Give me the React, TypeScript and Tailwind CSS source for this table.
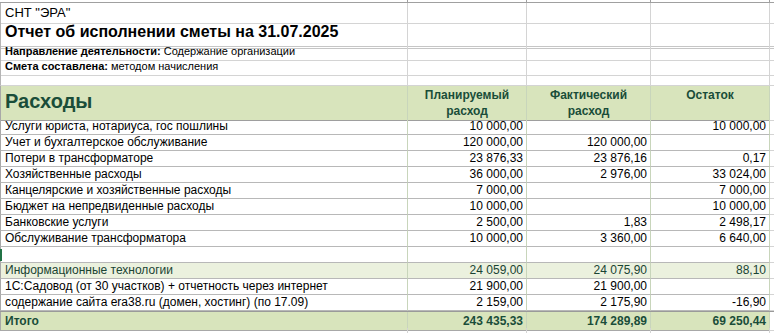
import type { ReactNode } from 'react'

type Line = {
  name: string
  plan: string
  fact: string
  rest: string
  kind?: 'group' | 'total' | 'empty'
}

const lines: Line[] = [
  { name: 'Услуги юриста, нотариуса, гос пошлины', plan: '10 000,00', fact: '', rest: '10 000,00' },
  { name: 'Учет и бухгалтерское обслуживание', plan: '120 000,00', fact: '120 000,00', rest: '' },
  { name: 'Потери в трансформаторе', plan: '23 876,33', fact: '23 876,16', rest: '0,17' },
  { name: 'Хозяйственные расходы', plan: '36 000,00', fact: '2 976,00', rest: '33 024,00' },
  { name: 'Канцелярские и хозяйственные расходы', plan: '7 000,00', fact: '', rest: '7 000,00' },
  { name: 'Бюджет на непредвиденные расходы', plan: '10 000,00', fact: '', rest: '10 000,00' },
  { name: 'Банковские услуги', plan: '2 500,00', fact: '1,83', rest: '2 498,17' },
  { name: 'Обслуживание трансформатора', plan: '10 000,00', fact: '3 360,00', rest: '6 640,00' },
  { name: '', plan: '', fact: '', rest: '', kind: 'empty' },
  { name: 'Информационные технологии', plan: '24 059,00', fact: '24 075,90', rest: '88,10', kind: 'group' },
  { name: '1С:Садовод (от 30 участков) + отчетность через интернет', plan: '21 900,00', fact: '21 900,00', rest: '' },
  { name: 'содержание сайта era38.ru (домен, хостинг) (по 17.09)', plan: '2 159,00', fact: '2 175,90', rest: '-16,90' },
]

const grid = 'grid grid-cols-[408px_119px_124px_119px_4px]'

function TopRow({ h, children, bottom = 'border-b border-[#d4d4d4]' }: { h: string; children?: ReactNode; bottom?: string }) {
  return (
    <div className={`${grid} ${h}`}>
      <div className={`${bottom} border-l border-r border-l-[#b5b5b5] border-r-[#d4d4d4] pl-[4px] flex items-center whitespace-nowrap overflow-visible`}>
        {children}
      </div>
      <div className={`${bottom} border-r border-r-[#d4d4d4]`} />
      <div className={`${bottom} border-r border-r-[#d4d4d4]`} />
      <div className={`${bottom} border-r border-r-[#d4d4d4]`} />
      <div className={bottom} />
    </div>
  )
}

function DataRow({ line }: { line: Line }) {
  const bg = line.kind === 'group' ? 'bg-[#ebf1de]' : ''
  const tone = line.kind === 'group' ? 'text-[#1a4433]' : 'text-black'
  const cell = `h-[16px] border-b border-b-[#b8b8b8] border-r border-r-[#c8d5bb] ${bg}`
  return (
    <div className={`${grid} text-[12px] leading-[15px] ${tone}`}>
      <div className={`${cell} border-l border-l-[#a8a8a8] pl-[4px] flex items-center whitespace-nowrap relative`}>
        {line.kind === 'empty' && <span className="absolute left-[-1px] top-[2px] w-[2px] h-[12px] bg-[#217346]" />}
        {line.name}
      </div>
      <div className={`${cell} pr-[3px] flex items-center justify-end`}>{line.plan}</div>
      <div className={`${cell} pr-[3px] flex items-center justify-end`}>{line.fact}</div>
      <div className={`${cell} pr-[3px] flex items-center justify-end`}>{line.rest}</div>
      <div className="h-[16px] border-b border-b-[#d4d4d4]" />
    </div>
  )
}

export default function App() {
  return (
    <div className="w-[774px] h-[333px] overflow-hidden bg-white font-['Liberation_Sans',Arial,sans-serif] text-black">
      {/* column header edge */}
      <div className={`${grid} h-[2px]`}>
        <div className="border-r border-[#a0a0a0]" />
        <div className="border-r border-[#a0a0a0]" />
        <div className="border-r border-[#a0a0a0]" />
        <div className="border-r border-[#a0a0a0]" />
        <div />
      </div>
      <div className="border-t border-[#a0a0a0]">
        <TopRow h="h-[17px]">
          <span className="text-[13px]">СНТ "ЭРА"</span>
        </TopRow>
        <TopRow h="h-[23px]" bottom="border-b-[3px] border-double border-b-[#c6c6c6]">
          <span className="text-[16px] font-bold pb-[2px]">Отчет об исполнении сметы на 31.07.2025</span>
        </TopRow>
        <TopRow h="h-[15px]">
          <span className="text-[11px]">
            <b>Направление деятельности:</b> Содержание организации
          </span>
        </TopRow>
        <TopRow h="h-[15px]">
          <span className="text-[11px]">
            <b>Смета составлена:</b> методом начисления
          </span>
        </TopRow>
        <TopRow h="h-[13px]" />
      </div>

      {/* table header */}
      <div className={`${grid} h-[33px] text-[#1a4d39] font-bold`}>
        <div className="bg-[#d8e4bc] border-l border-l-[#a8a8a8] border-r border-r-[#c8d5bb] border-b border-b-[#9e9e9e] pl-[4px] pb-[4px] flex items-center text-[20px]">
          Расходы
        </div>
        <div className="bg-[#d8e4bc] border-r border-r-[#c8d5bb] border-b border-b-[#9e9e9e] pt-[1px] text-center text-[12px] leading-[16px]">
          Планируемый
          <br />
          расход
        </div>
        <div className="bg-[#d8e4bc] border-r border-r-[#c8d5bb] border-b border-b-[#9e9e9e] pt-[1px] text-center text-[12px] leading-[16px]">
          Фактический
          <br />
          расход
        </div>
        <div className="bg-[#d8e4bc] border-r border-r-[#c8d5bb] border-b border-b-[#9e9e9e] pt-[1px] text-center text-[12px] leading-[16px]">
          Остаток
        </div>
        <div className="border-b border-b-[#d4d4d4]" />
      </div>

      {lines.map((line, i) => (
        <DataRow key={i} line={line} />
      ))}

      {/* total */}
      <div className={`${grid} h-[17px] text-[12px] font-bold text-[#1a4d39] border-t border-t-[#9a9a9a]`}>
        <div className="bg-[#d8e4bc] border-l border-l-[#a8a8a8] border-r border-r-[#c8d5bb] border-b border-b-[#a8a8a8] pl-[4px] flex items-center">
          Итого
        </div>
        <div className="bg-[#d8e4bc] border-r border-r-[#c8d5bb] border-b border-b-[#a8a8a8] pr-[3px] flex items-center justify-end">
          243 435,33
        </div>
        <div className="bg-[#d8e4bc] border-r border-r-[#c8d5bb] border-b border-b-[#a8a8a8] pr-[3px] flex items-center justify-end">
          174 289,89
        </div>
        <div className="bg-[#d8e4bc] border-r border-r-[#c8d5bb] border-b border-b-[#a8a8a8] pr-[3px] flex items-center justify-end">
          69 250,44
        </div>
        <div className="border-b border-b-[#d4d4d4]" />
      </div>

      <div className={`${grid} h-[6px]`}>
        <div className="border-r border-r-[#d4d4d4]" />
        <div className="border-r border-r-[#d4d4d4]" />
        <div className="border-r border-r-[#d4d4d4]" />
        <div className="border-r border-r-[#d4d4d4]" />
        <div />
      </div>
    </div>
  )
}
